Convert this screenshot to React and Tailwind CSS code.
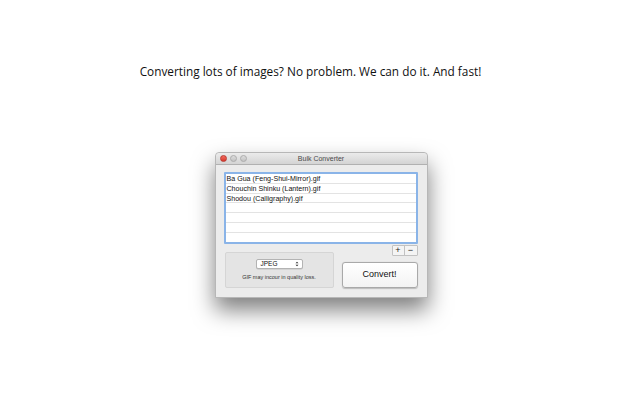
const files = [
  'Ba Gua (Feng-Shui-Mirror).gif',
  'Chouchin Shinku (Lantern).gif',
  'Shodou (Calligraphy).gif',
  '',
  '',
  '',
  '',
];

const TrafficLights = () => (
  <div className="absolute left-[4px] top-[2px] flex gap-[3px]">
    <span className="w-[7px] h-[7px] rounded-full bg-gradient-to-b from-[#f36b5f] to-[#d7362b] border border-[#b93a31]" />
    <span className="w-[7px] h-[7px] rounded-full bg-gradient-to-b from-[#dcdcdc] to-[#c4c4c4] border border-[#acacac]" />
    <span className="w-[7px] h-[7px] rounded-full bg-gradient-to-b from-[#dcdcdc] to-[#c4c4c4] border border-[#acacac]" />
  </div>
);

const App = () => {
  return (
    <div className="w-[643px] h-[402px] bg-white flex flex-col items-center font-['Liberation_Sans',Arial,sans-serif]">
      <h1 className="mt-[62px] mr-[22px] h-[18px] leading-[18px] text-[11.8px] text-[#111] font-['Open_Sans',sans-serif]">
        Converting lots of images? No problem. We can do it. And fast!
      </h1>

      {/* window */}
      <div className="mt-[72px] ml-[-1px] w-[213px] h-[146px] bg-[#ececec] rounded-t-[4px] border border-[#b7b7b7] shadow-[0_12px_22px_rgba(0,0,0,0.5)] flex flex-col">
        <div className="relative h-[12px] rounded-t-[4px] bg-gradient-to-b from-[#ebebeb] to-[#d4d4d4] border-b border-[#b1b1b1] flex items-center justify-center">
          <TrafficLights />
          <span className="text-[7px] leading-none text-[#4a4a4a]">Bulk Converter</span>
        </div>

        <div className="pl-[8px] pr-[9px] pt-[7px] flex flex-col">
          {/* file list */}
          <div className="h-[72px] bg-white border-2 border-[#8ab4e8] rounded-[1px] overflow-hidden">
            {files.map((name, i) => (
              <div
                key={i}
                className="h-[9.8px] border-b border-[#e3e3e3] pl-[1px] pt-[1px] text-[7.1px] leading-[9px] text-[#111] whitespace-nowrap"
              >
                {name}
              </div>
            ))}
          </div>

          <div className="flex gap-[8px]">
            {/* format group */}
            <div className="mt-[8px] ml-[1px] w-[109px] h-[36px] bg-[#e4e4e4] border border-[#d5d5d5] rounded-[2px] flex flex-col items-center">
              <div className="mt-[6px] w-[47px] h-[10px] bg-white border border-[#b3b3b3] rounded-[2px] shadow-[0_0.5px_0.5px_rgba(0,0,0,0.15)] flex items-center justify-between pl-[4px] pr-[3px]">
                <span className="text-[6.5px] leading-none text-[#111]">JPEG</span>
                <svg width="4" height="6" viewBox="0 0 4 6">
                  <path d="M0.5 2.3 L2 0.8 L3.5 2.3 Z M0.5 3.7 L2 5.2 L3.5 3.7 Z" fill="#333" />
                </svg>
              </div>
              <span className="mt-[6px] text-[5.5px] leading-none text-[#333]">GIF may incour in quality loss.</span>
            </div>

            {/* right column */}
            <div className="flex-1 flex flex-col items-end">
              <div className="mt-[1px] flex h-[11px] border border-[#c2c2c2] bg-[#f4f4f4] rounded-[1px]">
                <span className="w-[12px] flex items-center justify-center border-r border-[#c2c2c2] text-[9px] leading-none text-[#222]">+</span>
                <span className="w-[12px] flex items-center justify-center text-[9px] leading-none text-[#222]">−</span>
              </div>
              <button className="mt-[6px] w-full h-[26px] bg-gradient-to-b from-[#ffffff] to-[#f3f3f3] border border-[#a9a9a9] rounded-[3px] shadow-[0_0.5px_1px_rgba(0,0,0,0.2)] text-[9px] text-[#111]">
                Convert!
              </button>
            </div>
          </div>
        </div>
      </div>
    </div>
  );
};

export default App;
